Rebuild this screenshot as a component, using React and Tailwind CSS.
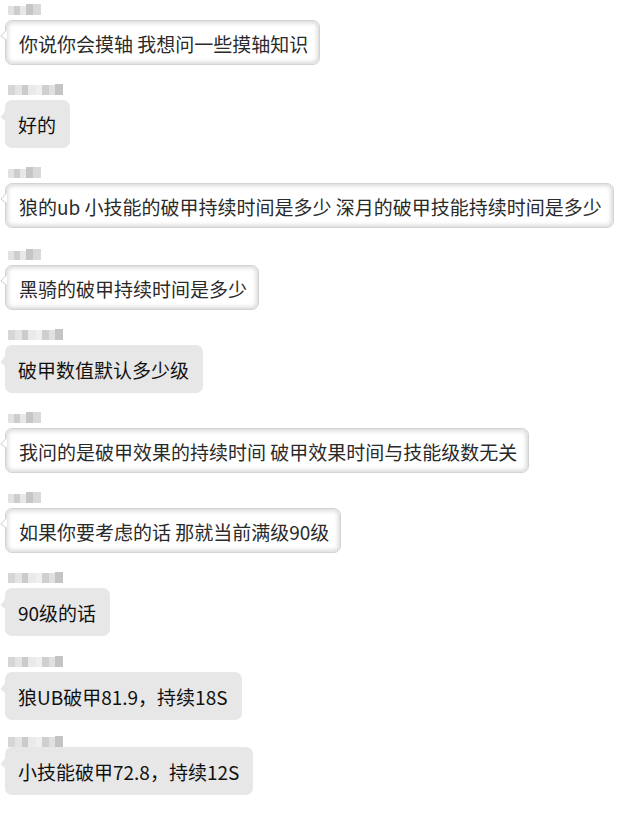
import React from "react";

const messages = [
  { who: "a", text: "你说你会摸轴 我想问一些摸轴知识", h: "h-[80px]" },
  { who: "b", text: "好的", h: "h-[83px]" },
  { who: "a", text: "狼的ub 小技能的破甲持续时间是多少 深月的破甲技能持续时间是多少", h: "h-[82px]" },
  { who: "a", text: "黑骑的破甲持续时间是多少", h: "h-[80px]" },
  { who: "b", text: "破甲数值默认多少级", h: "h-[83px]" },
  { who: "a", text: "我问的是破甲效果的持续时间 破甲效果时间与技能级数无关", h: "h-[80px]" },
  { who: "a", text: "如果你要考虑的话 那就当前满级90级", h: "h-[80px]" },
  { who: "b", text: "90级的话", h: "h-[84px]" },
  { who: "b", text: "狼UB破甲81.9，持续18S", h: "h-[80px]" },
  { who: "b", text: "小技能破甲72.8，持续12S", h: "h-[62px]" },
];

function NameA() {
  return (
    <div className="flex items-end mt-[4px] ml-[8px] blur-[0.5px]">
      <div className="w-[6px] h-[9px] bg-[#e2e2e2]" />
      <div className="w-[6px] h-[9px] bg-[#cdcdcd]" />
      <div className="w-[6px] h-[9px] bg-[#e8e8e8]" />
      <div className="w-[7px] h-[11px] bg-[#c6c6c6]" />
      <div className="w-[8px] h-[11px] bg-[#d9d9d9]" />
    </div>
  );
}

function NameB() {
  return (
    <div className="flex items-end mt-[4px] ml-[8px] blur-[0.5px]">
      <div className="w-[7px] h-[10px] bg-[#d6d6d6]" />
      <div className="w-[7px] h-[10px] bg-[#e4e4e4]" />
      <div className="w-[6px] h-[10px] bg-[#cbcbcb]" />
      <div className="w-[8px] h-[10px] bg-[#eaeaea]" />
      <div className="w-[6px] h-[10px] bg-[#f0f0f0]" />
      <div className="w-[7px] h-[10px] bg-[#cfcfcf]" />
      <div className="w-[6px] h-[10px] bg-[#e0e0e0]" />
      <div className="w-[8px] h-[11px] bg-[#c4c4c4]" />
    </div>
  );
}

function TailWhite() {
  return (
    <svg className="absolute left-[-5px] top-[9px]" width="7" height="12" viewBox="0 0 7 12">
      <path d="M7 0.5 L0.8 7 L7 11.5" fill="#ffffff" stroke="#cfcfcf" strokeWidth="1" />
    </svg>
  );
}

function TailGray() {
  return (
    <svg className="absolute left-[-5px] top-[10px]" width="6" height="12" viewBox="0 0 6 12">
      <path d="M6 0 L0.5 7 L6 12 Z" fill="#e7e7e7" />
    </svg>
  );
}

function Bubble({ who, text }) {
  if (who === "a") {
    return (
      <div className="relative ml-[5px] self-start">
        <div className="h-[45px] flex items-center pl-[13px] pr-[11px] bg-white rounded-[7px] border border-[#d3d3d3] shadow-[inset_0_0_4px_2px_rgba(0,0,0,0.15)] whitespace-nowrap text-[#2a2a2a]">
          <span className="pt-[2px]">{text}</span>
        </div>
        <TailWhite />
      </div>
    );
  }
  return (
    <div className="relative ml-[5px] self-start">
      <div className="h-[48px] flex items-center pl-[13px] pr-[14px] bg-[#e7e7e7] rounded-[7px] whitespace-nowrap text-[#111111]">
        <span className="pt-[1px]">{text}</span>
      </div>
      <TailGray />
    </div>
  );
}

export default function App() {
  return (
    <div
      className="w-[641px] h-[814px] bg-white overflow-hidden text-[19px] leading-none"
      style={{ fontFamily: '"Noto Sans CJK SC", "Noto Sans", sans-serif' }}
    >
      {messages.map((m, i) => (
        <div key={i} className={`flex flex-col ${m.h}`}>
          <div className="h-[20px]">{m.who === "a" ? <NameA /> : <NameB />}</div>
          <Bubble who={m.who} text={m.text} />
        </div>
      ))}
    </div>
  );
}
